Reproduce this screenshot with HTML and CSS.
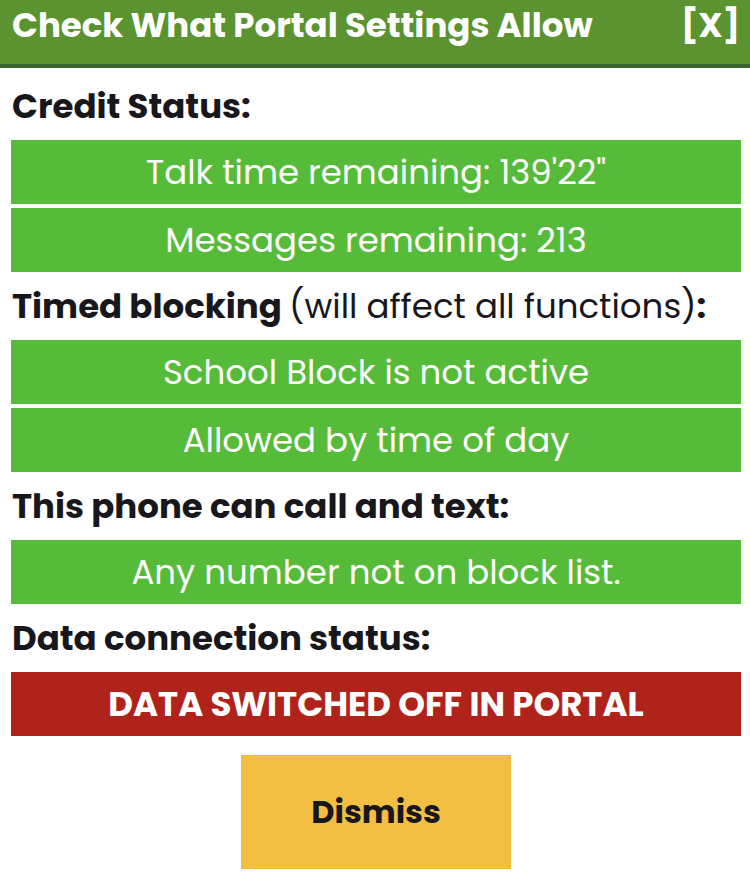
FILE: index.html
```html
<!DOCTYPE html>
<html>
<head>
<meta charset="utf-8">
<link rel="stylesheet" href="styles.css">
</head>
<body>
<div class="header">
  <span class="title">Check What Portal Settings Allow</span>
  <span class="close">[X]</span>
</div>
<div class="content">
  <div class="heading first">Credit Status:</div>
  <div class="bar">Talk time remaining: 139'22"</div>
  <div class="bar">Messages remaining: 213</div>
  <div class="heading">Timed blocking <span class="light">(will affect all functions)</span>:</div>
  <div class="bar">School Block is not active</div>
  <div class="bar">Allowed by time of day</div>
  <div class="heading">This phone can call and text:</div>
  <div class="bar">Any number not on block list.</div>
  <div class="heading">Data connection status:</div>
  <div class="bar red">DATA SWITCHED OFF IN PORTAL</div>
  <div class="actions"><button class="dismiss">Dismiss</button></div>
</div>
</body>
</html>
```
FILE: styles.css
```css
* { box-sizing: border-box; }
body {
  margin: 0;
  background: #ffffff;
  font-family: "Poppins", Inter, "Noto Sans", sans-serif;
  color: #17171c;
}
.header {
  height: 68px;
  background: #5b9330;
  border-bottom: 4px solid #3e6131;
  display: flex;
  justify-content: space-between;
  align-items: flex-start;
  padding: 0 10px 0 12px;
  color: #ffffff;
  font-weight: 700;
  font-size: 34px;
  line-height: 50px;
}
.close { font-size: 34px; }
.content {
  padding: 0 9px 0 11px;
  display: flex;
  flex-direction: column;
}
.heading {
  height: 68px;
  line-height: 68px;
  font-size: 34px;
  font-weight: 700;
  padding-left: 1px;
  white-space: nowrap;
}
.heading.first { margin-top: 4px; }
.light { font-weight: 400; }
.bar {
  height: 64px;
  line-height: 64px;
  background: #57bb3a;
  color: #ffffff;
  text-align: center;
  font-size: 34px;
  font-weight: 400;
  white-space: nowrap;
}
.bar + .bar { margin-top: 4px; }
.bar.red {
  background: #b0231a;
  font-weight: 700;
}
.actions {
  display: flex;
  justify-content: center;
  padding-top: 19px;
}
.dismiss {
  width: 270px;
  height: 114px;
  border: none;
  background: #f2bf43;
  color: #17171c;
  font-family: inherit;
  font-size: 32px;
  font-weight: 700;
}
```
